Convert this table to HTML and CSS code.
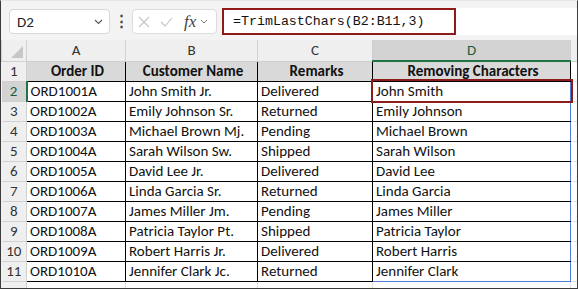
FILE: index.html
```html
<!DOCTYPE html>
<html lang="en">
<head>
    <meta charset="UTF-8">
    <meta name="viewport" content="width=device-width, initial-scale=1.0">
    <title>TrimLastChars</title>
    <link rel="stylesheet" href="styles.css">
</head>
<body>
    <div class="frame">
        <div class="toolbar">
            <div class="namebox">
                <span>D2</span>
                <svg class="chev" width="9" height="6" viewBox="0 0 9 6"><path d="M1 1l3.5 3.5L8 1" fill="none" stroke="#555" stroke-width="1.1"/></svg>
            </div>
            <div class="dots">&#8942;</div>
            <div class="fxbox">
                <svg width="12" height="12" viewBox="0 0 12 12"><path d="M1 1l10 10M11 1L1 11" stroke="#c4c4c4" stroke-width="1.1"/></svg>
                <svg width="13" height="10" viewBox="0 0 13 10"><path d="M1 5l4 4 7-8" fill="none" stroke="#c4c4c4" stroke-width="1.1"/></svg>
                <span class="fx">fx</span>
                <svg width="8" height="5" viewBox="0 0 8 5"><path d="M1 1l3 3 3-3" fill="none" stroke="#777" stroke-width="1"/></svg>
            </div>
            <div class="formula">
                <div class="formula-text">=TrimLastChars(B2:B11,3)</div>
            </div>
        </div>

        <table class="sheet">
            <colgroup>
                <col class="w-row"><col class="w-a"><col class="w-b"><col class="w-c"><col class="w-d"><col>
            </colgroup>
            <thead>
                <tr class="letters">
                    <th class="corner"><span class="tri"></span></th>
                    <th>A</th><th>B</th><th>C</th><th class="sel">D</th><th></th>
                </tr>
            </thead>
            <tbody id="rows">
                <tr class="head">
                    <th class="rn">1</th>
                    <td>Order ID</td><td>Customer Name</td><td>Remarks</td><td class="hd">Removing Characters</td><td class="out"></td>
                </tr>
            </tbody>
        </table>
    </div>

    <script>
        const orders = [
            ["ORD1001A", "John Smith Jr.", "Delivered"],
            ["ORD1002A", "Emily Johnson Sr.", "Returned"],
            ["ORD1003A", "Michael Brown Mj.", "Pending"],
            ["ORD1004A", "Sarah Wilson Sw.", "Shipped"],
            ["ORD1005A", "David Lee Jr.", "Delivered"],
            ["ORD1006A", "Linda Garcia Sr.", "Returned"],
            ["ORD1007A", "James Miller Jm.", "Pending"],
            ["ORD1008A", "Patricia Taylor Pt.", "Shipped"],
            ["ORD1009A", "Robert Harris Jr.", "Delivered"],
            ["ORD1010A", "Jennifer Clark Jc.", "Returned"]
        ];

        // same as the sheet formula: drop the last 3 characters
        function trimLastChars(text, n) {
            return text.slice(0, text.length - n).trim();
        }

        function renderRows() {
            let body = document.getElementById("rows");
            orders.forEach((o, i) => {
                let row = document.createElement("tr");
                let cls = "spill";
                if (i === 0) cls += " active";
                if (i === orders.length - 1) cls += " last";
                row.innerHTML = `
                    <th class="rn${i === 0 ? " cur" : ""}">${i + 2}</th>
                    <td>${o[0]}</td>
                    <td>${o[1]}</td>
                    <td>${o[2]}</td>
                    <td class="${cls}">${trimLastChars(o[1], 3)}</td>
                    <td class="out"></td>
                `;
                body.appendChild(row);
            });
            let tail = document.createElement("tr");
            tail.className = "tail";
            tail.innerHTML = `<th class="rn"></th><td></td><td></td><td></td><td></td><td class="out"></td>`;
            body.appendChild(tail);
        }

        renderRows();
    </script>
</body>
</html>
```

FILE: styles.css
```css
body {
    margin: 0;
    padding: 0;
    font-family: Carlito, Lato, sans-serif;
    background-color: #fff;
}
.frame {
    width: 578px;
    height: 289px;
    box-sizing: border-box;
    border: 1px solid #3a3a3a;
    border-top-color: #e6e6e6;
    overflow: hidden;
    background-color: #f3f3f3;
}
.toolbar {
    height: 39px;
    box-sizing: border-box;
    display: flex;
    align-items: flex-start;
    padding: 7px 0 0 8px;
}
.namebox {
    width: 101px;
    height: 25px;
    margin-top: 1px;
    box-sizing: border-box;
    border: 1px solid #d8d8d8;
    border-radius: 4px;
    background-color: #fff;
    display: flex;
    align-items: center;
    justify-content: space-between;
    padding: 0 6px 0 7px;
    font-size: 15px;
    color: #222;
}
.dots {
    width: 22px;
    text-align: center;
    font-size: 15px;
    line-height: 27px;
    color: #444;
    font-weight: bold;
}
.fxbox {
    width: 85px;
    height: 25px;
    margin-top: 1px;
    box-sizing: border-box;
    border: 1px solid #dcdcdc;
    border-radius: 4px;
    background-color: #fff;
    display: flex;
    align-items: center;
    gap: 10px;
    padding: 0 4px 0 5px;
}
.fxbox .fx {
    font-family: "Liberation Serif", serif;
    font-style: italic;
    font-size: 17px;
    color: #444;
    margin-left: 1px;
    margin-right: -6px;
}
.formula {
    flex: 1;
    height: 27px;
    margin-left: 5px;
    background-color: #fff;
}
.formula-text {
    width: 234px;
    height: 27px;
    box-sizing: border-box;
    border: 2px solid #8e1a1a;
    font-family: "Liberation Mono", monospace;
    font-size: 13.3px;
    line-height: 23px;
    padding-left: 9px;
    color: #111;
}

.sheet {
    border-collapse: collapse;
    table-layout: fixed;
    width: 577px;
    font-size: 15px;
    color: #111;
}
.w-row { width: 25px; }
.w-a { width: 99px; }
.w-b { width: 132px; }
.w-c { width: 115px; }
.w-d { width: 198px; }
.sheet tr {
    height: 20px;
}
.sheet td, .sheet th {
    padding: 0 0 0 3px;
    white-space: nowrap;
    overflow: hidden;
    line-height: 18px;
}
.sheet td {
    border: 1px solid #000;
    background-color: #fff;
}
.letters th {
    background-color: #efefef;
    border: 1px solid #d0d0d0;
    border-top: none;
    font-weight: normal;
    text-align: center;
    padding: 0;
    color: #333;
    height: 20px;
}
.letters th.sel {
    background-color: #d3d3d3;
    border-bottom: 2px solid #217346;
    color: #1e5c38;
}
.corner {
    position: relative;
}
.tri {
    position: absolute;
    right: 3px;
    bottom: 3px;
    width: 0;
    height: 0;
    border-left: 12px solid transparent;
    border-bottom: 12px solid #c6c6c6;
}
.rn {
    background-color: #efefef;
    border: 1px solid #d0d0d0;
    border-left: none;
    font-weight: normal;
    text-align: center;
    padding: 0 !important;
    color: #333;
}
.rn.cur {
    background-color: #d3d3d3;
    border-right: 2px solid #217346;
    color: #1e5c38;
}
.head td {
    background-color: #d9d9d9;
    font-weight: bold;
    text-align: center;
}
.sheet td.out {
    border: none;
    border-left: 1px solid #000;
    border-bottom: 1px solid #e2e2e2;
    background-color: #fff;
}
.letters th:last-child {
    border-right: none;
}
.sheet td.spill {
    border-left: 1px solid #4a7ed8;
    border-right: 1px solid #4a7ed8;
}
.sheet td.last {
    border-bottom: 1px solid #4a7ed8;
}
.sheet td.active {
    outline: 2px solid #8e1a1a;
    outline-offset: 0;
}
.tail td {
    border: none;
    border-right: 1px solid #e2e2e2;
}
.tail .rn {
    border-bottom: none;
}
.tail td.out {
    border: none;
}
```
